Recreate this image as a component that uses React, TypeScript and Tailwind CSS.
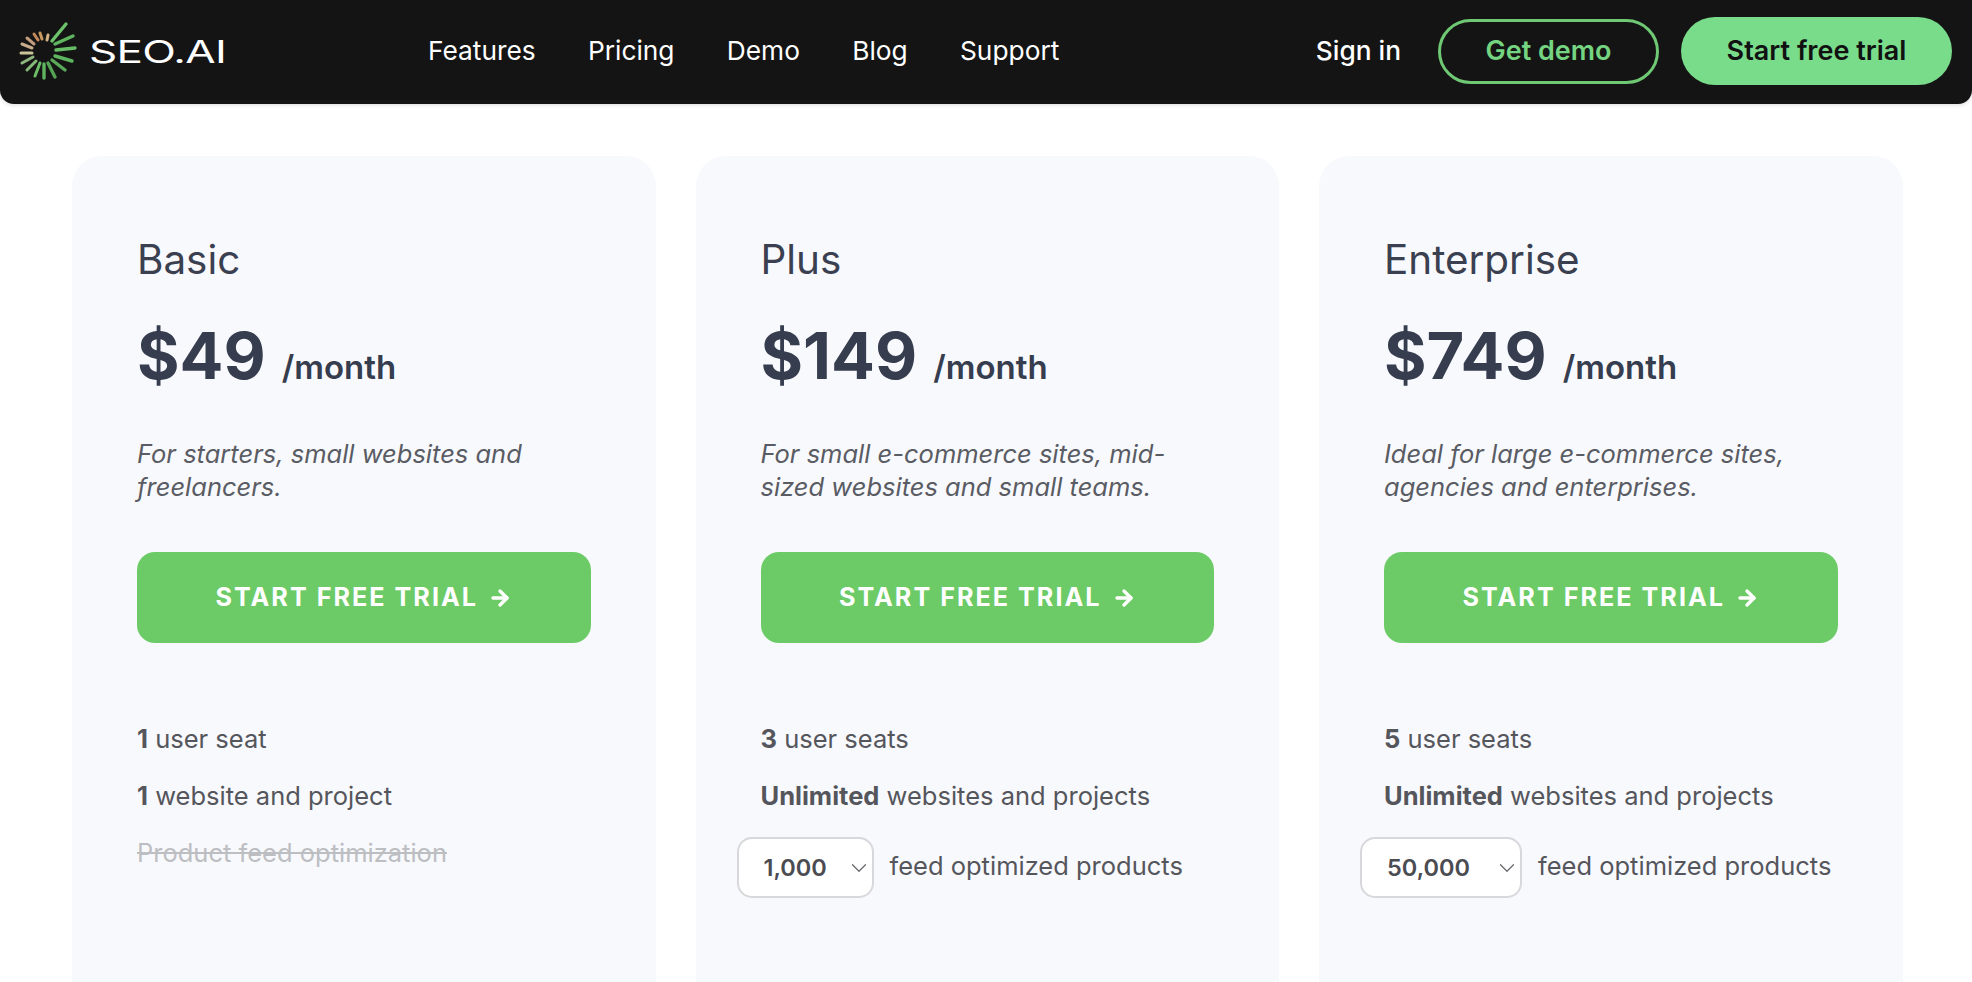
import { ArrowRight, ChevronDown } from "lucide-react";

const NAV_LINKS = ["Features", "Pricing", "Demo", "Blog", "Support"];

const LOGO_RAYS = [
  { x1: 52, y1: 40, x2: 66, y2: 23, color: "#6cc26a", w: 3.4 },
  { x1: 55, y1: 43, x2: 73, y2: 35, color: "#5fb45f", w: 3.4 },
  { x1: 56, y1: 49, x2: 75, y2: 47, color: "#67bd66", w: 3.4 },
  { x1: 55, y1: 55, x2: 72, y2: 60, color: "#5fb45f", w: 3.4 },
  { x1: 52, y1: 59, x2: 65, y2: 69, color: "#5aa95a", w: 3.4 },
  { x1: 48, y1: 62, x2: 55, y2: 76, color: "#55a255", w: 3.4 },
  { x1: 44, y1: 63, x2: 44, y2: 77, color: "#5fb45f", w: 3.4 },
  { x1: 40, y1: 62, x2: 35, y2: 75, color: "#6cbc68", w: 3 },
  { x1: 36, y1: 60, x2: 27, y2: 69, color: "#86b878", w: 3 },
  { x1: 33, y1: 56, x2: 22, y2: 62, color: "#8fb67c", w: 3 },
  { x1: 32, y1: 52, x2: 21, y2: 52, color: "#c9c49a", w: 3 },
  { x1: 32, y1: 47, x2: 22, y2: 43, color: "#c7ad8c", w: 3 },
  { x1: 34, y1: 43, x2: 27, y2: 37, color: "#c29d7c", w: 3 },
  { x1: 38, y1: 39, x2: 34, y2: 33, color: "#c48a5c", w: 3 },
  { x1: 42, y1: 38, x2: 40, y2: 32, color: "#c6975f", w: 3 },
  { x1: 47, y1: 39, x2: 48, y2: 34, color: "#d0b184", w: 3 },
];

type Plan = {
  name: string;
  price: string;
  description: string[];
  features: { bold: string; text: string }[];
  selectValue?: string;
  selectWidth?: string;
};

const PLANS: Plan[] = [
  {
    name: "Basic",
    price: "$49",
    description: ["For starters, small websites and", "freelancers."],
    features: [
      { bold: "1", text: "user seat" },
      { bold: "1", text: "website and project" },
    ],
  },
  {
    name: "Plus",
    price: "$149",
    description: ["For small e-commerce sites, mid-", "sized websites and small teams."],
    features: [
      { bold: "3", text: "user seats" },
      { bold: "Unlimited", text: "websites and projects" },
    ],
    selectValue: "1,000",
    selectWidth: "w-[137px]",
  },
  {
    name: "Enterprise",
    price: "$749",
    description: ["Ideal for large e-commerce sites,", "agencies and enterprises."],
    features: [
      { bold: "5", text: "user seats" },
      { bold: "Unlimited", text: "websites and projects" },
    ],
    selectValue: "50,000",
    selectWidth: "w-[162px]",
  },
];

function Logo() {
  return (
    <div className="flex items-center">
      <svg width="89" height="100" viewBox="0 0 89 100" className="shrink-0">
        {LOGO_RAYS.map((ray) => (
          <line
            key={`${ray.x2}-${ray.y2}`}
            x1={ray.x1}
            y1={ray.y1}
            x2={ray.x2}
            y2={ray.y2}
            stroke={ray.color}
            strokeWidth={ray.w}
            strokeLinecap="round"
          />
        ))}
      </svg>
      <span className="w-[133px] origin-left scale-x-[1.42] font-['Inter',sans-serif] text-[31px] leading-none font-normal tracking-[-0.5px] text-white">
        SEO.AI
      </span>
    </div>
  );
}

function Header() {
  return (
    <header className="flex h-[104px] items-center rounded-b-[14px] bg-[#141414] pb-[2px] shadow-[0_1px_4px_rgba(0,0,0,0.15)]">
      <Logo />
      <nav className="ml-[206px] flex gap-[52.3px] text-[26.3px] text-white">
        {NAV_LINKS.map((link) => (
          <a key={link}>{link}</a>
        ))}
      </nav>
      <div className="mr-[20px] ml-auto flex items-center">
        <a className="text-[26.3px] font-medium text-white">Sign in</a>
        <a className="ml-[37px] flex h-[65px] w-[221px] items-center justify-center rounded-full border-[3px] border-[#6fc873] text-[27px] font-semibold text-[#74d481]">
          Get demo
        </a>
        <a className="ml-[22px] flex h-[68px] w-[271px] items-center justify-center rounded-full bg-[#79dc8b] text-[27px] font-semibold text-[#111]">
          Start free trial
        </a>
      </div>
    </header>
  );
}

function PlanCard({ plan }: { plan: Plan }) {
  return (
    <div className="h-[900px] w-[583.5px] shrink-0 rounded-[30px] bg-[#f8f9fd] px-[65px] pt-[80px]">
      <h2 className="text-[40.4px] leading-[48px] text-[#3a4050]">{plan.name}</h2>
      <div className="mt-[32px] flex items-baseline gap-[16px] text-[#363d4e]">
        <span className="text-[65px] leading-[80px] font-bold">{plan.price}</span>
        <span className="text-[33px] font-semibold">/month</span>
      </div>
      <p className="mt-[41px] text-[25.5px] leading-[33px] text-[#5a5c64] italic">
        {plan.description[0]}
        <br />
        {plan.description[1]}
      </p>
      <button className="mt-[49px] flex h-[91px] w-full items-center justify-center gap-[10px] rounded-[18px] bg-[#6ccb66] text-[25.2px] font-bold tracking-[2px] text-white">
        START FREE TRIAL
        <ArrowRight size={24} strokeWidth={3.4} />
      </button>
      <ul className="mt-[80px] flex flex-col gap-[25px] text-[25.5px] leading-[32px] text-[#55565c]">
        {plan.features.map((feature) => (
          <li key={feature.text}>
            <strong className="font-bold">{feature.bold}</strong> {feature.text}
          </li>
        ))}
        {plan.selectValue ? (
          <li className="-ml-[24px] flex items-center gap-[16px]">
            <div
              className={`flex h-[61px] items-center justify-between rounded-[15px] border-2 border-[#d8d8dc] bg-white pl-[25px] text-[23.5px] font-semibold text-[#4b4c52] ${plan.selectWidth}`}
            >
              {plan.selectValue}
              <ChevronDown size={26} strokeWidth={1.2} className="text-[#6a6b70]" />
            </div>
            <span className="mb-[4px]">feed optimized products</span>
          </li>
        ) : (
          <li className="text-[#bdbec2] line-through">Product feed optimization</li>
        )}
      </ul>
    </div>
  );
}

export default function App() {
  return (
    <div className="h-[982px] overflow-hidden bg-white font-['Inter',sans-serif]">
      <Header />
      <main className="mt-[52px] flex gap-[40px] pl-[72px]">
        {PLANS.map((plan) => (
          <PlanCard key={plan.name} plan={plan} />
        ))}
      </main>
    </div>
  );
}
